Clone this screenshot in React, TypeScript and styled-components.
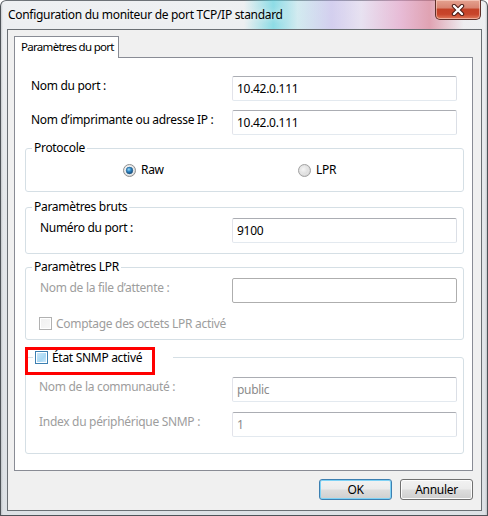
import React from "react";
import styled, { createGlobalStyle } from "styled-components";

const Global = createGlobalStyle`
  html, body { margin: 0; padding: 0; background: #ffffff; }
  body {
    font-family: "Noto Sans", "DejaVu Sans", sans-serif;
    font-size: 12px;
    letter-spacing: -0.3px;
    color: #000;
  }
  #root { width: 488px; height: 516px; }
`;

const Window = styled.div`
  width: 488px;
  height: 516px;
  box-sizing: border-box;
  display: flex;
  flex-direction: column;
  border-radius: 6px 6px 0 0;
  overflow: hidden;
  background:
    linear-gradient(90deg, rgba(90,96,102,0.35) 0, rgba(255,255,255,0) 3px, rgba(255,255,255,0) calc(100% - 3px), rgba(90,96,102,0.35) 100%),
    linear-gradient(180deg, #eef0f2 0, #e4e7ea 40%, #dde1e5 100%);
  box-shadow: inset 1px 0 0 #4e5358, inset -1px 0 0 #4e5358, inset 0 1px 0 #6d7277, inset 0 -1px 0 #4e5358;
`;

const TitleBar = styled.div`
  height: 29px;
  flex: 0 0 29px;
  display: flex;
  align-items: center;
  padding-left: 8px;
  box-sizing: border-box;
  background: linear-gradient(90deg,
    rgba(255,255,255,0) 50%,
    rgba(90,210,224,0.65) 56%,
    rgba(170,228,238,0.4) 61%,
    rgba(190,180,236,0.55) 68%,
    rgba(222,205,240,0.4) 74%,
    rgba(228,160,200,0.65) 82%,
    rgba(218,130,152,0.7) 88%,
    rgba(240,232,236,0.25) 95%,
    rgba(255,255,255,0) 100%);
`;

const Title = styled.span`
  flex: 1;
  font-size: 12px;
  color: #000;
  white-space: nowrap;
  text-shadow: 0 0 6px rgba(255,255,255,0.9);
`;

const CloseButton = styled.div`
  align-self: flex-start;
  width: 46px;
  height: 20px;
  margin-right: 7px;
  box-sizing: border-box;
  border: 1px solid #5e3029;
  border-top: none;
  border-radius: 0 0 5px 5px;
  background: linear-gradient(180deg, #e4a290 0%, #d98572 40%, #c44227 50%, #c8452a 75%, #e07a5c 100%);
  box-shadow: inset 0 0 0 1px rgba(255,220,210,0.55);
  display: flex;
  align-items: center;
  justify-content: center;
`;

const Client = styled.div`
  flex: 1;
  margin: 0 6px 5px 7px;
  border: 1px solid #6a6f74;
  background: #f0f0f0;
  padding: 6px 8px 10px 6px;
  display: flex;
  flex-direction: column;
`;

const TabStrip = styled.div`
  display: flex;
`;

const Tab = styled.div`
  position: relative;
  z-index: 1;
  width: 105px;
  height: 22px;
  margin-bottom: -1px;
  box-sizing: border-box;
  border: 1px solid #898c95;
  border-bottom: none;
  background: #ffffff;
  padding-left: 6px;
  font-size: 11.5px;
  letter-spacing: -0.7px;
  line-height: 20px;
  white-space: nowrap;
  overflow: hidden;
`;

const Panel = styled.div`
  height: 414px;
  box-sizing: border-box;
  border: 1px solid #898c95;
  background: #ffffff;
  padding: 18px 8px 0 10px;
  display: flex;
  flex-direction: column;
`;

const FieldRow = styled.div<{ $gap?: number; $inset?: number }>`
  display: flex;
  align-items: flex-start;
  justify-content: space-between;
  margin-top: ${(p) => p.$gap ?? 0}px;
  padding: 0 ${(p) => (p.$inset ? 6 : 7)}px 0 ${(p) => p.$inset ?? 6}px;
`;

const FieldLabel = styled.span<{ $disabled?: boolean }>`
  padding-top: 2px;
  line-height: 16px;
  white-space: nowrap;
  color: ${(p) => (p.$disabled ? "#9d9d9d" : "#000000")};
`;

const TextBox = styled.div<{ $grey?: boolean; $disabledFrame?: boolean }>`
  width: 225px;
  height: 25px;
  box-sizing: border-box;
  border: 1px solid;
  border-color: ${(p) =>
    p.$disabledFrame ? "#aeaeae" : "#abadb3 #dbdfe6 #e3e9ef #e2e3ea"};
  border-radius: 2px;
  background: #ffffff;
  padding-left: 4px;
  line-height: 23px;
  white-space: nowrap;
  color: ${(p) => (p.$grey ? "#8b8b8b" : "#000000")};
`;

const Group = styled.fieldset<{ $gap: number }>`
  margin: ${(p) => p.$gap}px 0 0 0;
  padding: 0;
  min-width: 0;
  border: 1px solid #d5dfe5;
  border-radius: 3px;
`;

const Legend = styled.legend`
  margin-left: 6px;
  padding: 0 2px;
  line-height: 16px;
  white-space: nowrap;
  color: #000;
`;

const CheckLegend = styled.legend`
  position: relative;
  margin-left: 7px;
  padding: 0 2px;
  width: 140px;
  box-sizing: border-box;
  height: 16px;
  display: flex;
  align-items: center;
  gap: 4px;
  white-space: nowrap;

  &::after {
    content: "";
    position: absolute;
    left: -8px;
    top: -2px;
    width: 130px;
    height: 28px;
    box-sizing: border-box;
    border: 3px solid #ff0000;
  }
`;

const GroupBody = styled.div<{ $top: number; $bottom: number }>`
  padding: ${(p) => p.$top}px 0 ${(p) => p.$bottom}px 0;
  display: flex;
  flex-direction: column;
`;

const RadioRow = styled.div`
  display: grid;
  grid-template-columns: 175px auto;
  padding-left: 97px;
  height: 16px;
`;

const RadioItem = styled.label`
  display: flex;
  align-items: center;
  gap: 5px;
  line-height: 16px;
`;

const CheckRow = styled.div`
  display: flex;
  align-items: center;
  gap: 4px;
  height: 16px;
  margin-top: 12px;
  padding-left: 13px;
  color: #9d9d9d;
  white-space: nowrap;
`;

const CheckBox = styled.span<{ $hot?: boolean }>`
  width: 13px;
  height: 13px;
  flex: 0 0 13px;
  box-sizing: border-box;
  border: 1px solid ${(p) => (p.$hot ? "#3c7fb1" : "#b1b1b1")};
  background: ${(p) =>
    p.$hot
      ? "linear-gradient(135deg, #cfeafb 0%, #a9d8f4 60%, #d9effc 100%)"
      : "linear-gradient(135deg, #f0f0f0 0%, #f7f7f7 100%)"};
  box-shadow: inset 0 0 0 1px #ffffff;
`;

const ButtonRow = styled.div`
  display: flex;
  justify-content: flex-end;
  gap: 8px;
  margin-top: 8px;
`;

const Button = styled.div<{ $default?: boolean }>`
  width: 73px;
  height: 21px;
  box-sizing: border-box;
  border: 1px solid ${(p) => (p.$default ? "#3c7fb1" : "#707070")};
  border-radius: 3px;
  background: linear-gradient(180deg, #f2f2f2 0%, #ebebeb 48%, #dddddd 52%, #cfcfcf 100%);
  box-shadow: ${(p) =>
    p.$default ? "inset 0 0 0 1px #7fd2f5" : "inset 0 0 0 1px #fcfcfc"};
  display: flex;
  align-items: center;
  justify-content: center;
  line-height: 16px;
  color: #000;
`;

const RadioOn = () => (
  <svg width="13" height="13" viewBox="0 0 13 13">
    <defs>
      <linearGradient id="ro" x1="0" y1="0" x2="1" y2="1">
        <stop offset="0" stopColor="#f4f4f4" />
        <stop offset="1" stopColor="#d2d2d2" />
      </linearGradient>
      <radialGradient id="rd" cx="0.4" cy="0.35" r="0.7">
        <stop offset="0" stopColor="#9fdcf8" />
        <stop offset="0.45" stopColor="#2f86c4" />
        <stop offset="1" stopColor="#113f6b" />
      </radialGradient>
    </defs>
    <circle cx="6.5" cy="6.5" r="6" fill="url(#ro)" stroke="#8f8f8f" strokeWidth="1" />
    <circle cx="6.5" cy="6.5" r="4.3" fill="#ffffff" />
    <circle cx="6.5" cy="6.5" r="3.4" fill="url(#rd)" stroke="#2c628b" strokeWidth="0.6" />
  </svg>
);

const RadioOff = () => (
  <svg width="13" height="13" viewBox="0 0 13 13">
    <defs>
      <radialGradient id="rf" cx="0.4" cy="0.4" r="0.7">
        <stop offset="0" stopColor="#f6f6f6" />
        <stop offset="1" stopColor="#cdcdcd" />
      </radialGradient>
    </defs>
    <circle cx="6.5" cy="6.5" r="6" fill="url(#rf)" stroke="#a2a2a2" strokeWidth="1" />
    <circle cx="6.5" cy="6.5" r="4" fill="none" stroke="#e9e9e9" strokeWidth="0.8" />
  </svg>
);

const CloseGlyph = () => (
  <svg width="14" height="12" viewBox="0 0 14 12">
    <path d="M3 2 L11 10 M11 2 L3 10" stroke="#4a1c16" strokeWidth="4.4" strokeLinecap="round" />
    <path d="M3 2 L11 10 M11 2 L3 10" stroke="#ffffff" strokeWidth="2.4" strokeLinecap="round" />
  </svg>
);

export default function App() {
  return (
    <>
      <Global />
      <Window>
        <TitleBar>
          <Title>Configuration du moniteur de port TCP/IP standard</Title>
          <CloseButton>
            <CloseGlyph />
          </CloseButton>
        </TitleBar>
        <Client>
          <TabStrip>
            <Tab>Paramètres du port</Tab>
          </TabStrip>
          <Panel>
            <FieldRow>
              <FieldLabel>Nom du port :</FieldLabel>
              <TextBox>10.42.0.111</TextBox>
            </FieldRow>
            <FieldRow $gap={9}>
              <FieldLabel>Nom d’imprimante ou adresse IP :</FieldLabel>
              <TextBox>10.42.0.111</TextBox>
            </FieldRow>

            <Group $gap={5}>
              <Legend>Protocole</Legend>
              <GroupBody $top={6} $bottom={13}>
                <RadioRow>
                  <RadioItem>
                    <RadioOn />
                    Raw
                  </RadioItem>
                  <RadioItem>
                    <RadioOff />
                    LPR
                  </RadioItem>
                </RadioRow>
              </GroupBody>
            </Group>

            <Group $gap={7}>
              <Legend>Paramètres bruts</Legend>
              <GroupBody $top={3} $bottom={10}>
                <FieldRow $inset={14}>
                  <FieldLabel>Numéro du port :</FieldLabel>
                  <TextBox>9100</TextBox>
                </FieldRow>
              </GroupBody>
            </Group>

            <Group $gap={5}>
              <Legend>Paramètres LPR</Legend>
              <GroupBody $top={3} $bottom={8}>
                <FieldRow $inset={14}>
                  <FieldLabel $disabled>Nom de la file d’attente :</FieldLabel>
                  <TextBox $disabledFrame />
                </FieldRow>
                <CheckRow>
                  <CheckBox />
                  Comptage des octets LPR activé
                </CheckRow>
              </GroupBody>
            </Group>

            <Group $gap={9}>
              <CheckLegend>
                <CheckBox $hot />
                État SNMP activé
              </CheckLegend>
              <GroupBody $top={12} $bottom={16}>
                <FieldRow $inset={13}>
                  <FieldLabel $disabled>Nom de la communauté :</FieldLabel>
                  <TextBox $grey>public</TextBox>
                </FieldRow>
                <FieldRow $inset={13} $gap={10}>
                  <FieldLabel $disabled>Index du périphérique SNMP :</FieldLabel>
                  <TextBox $grey>1</TextBox>
                </FieldRow>
              </GroupBody>
            </Group>
          </Panel>
          <ButtonRow>
            <Button $default>OK</Button>
            <Button>Annuler</Button>
          </ButtonRow>
        </Client>
      </Window>
    </>
  );
}
